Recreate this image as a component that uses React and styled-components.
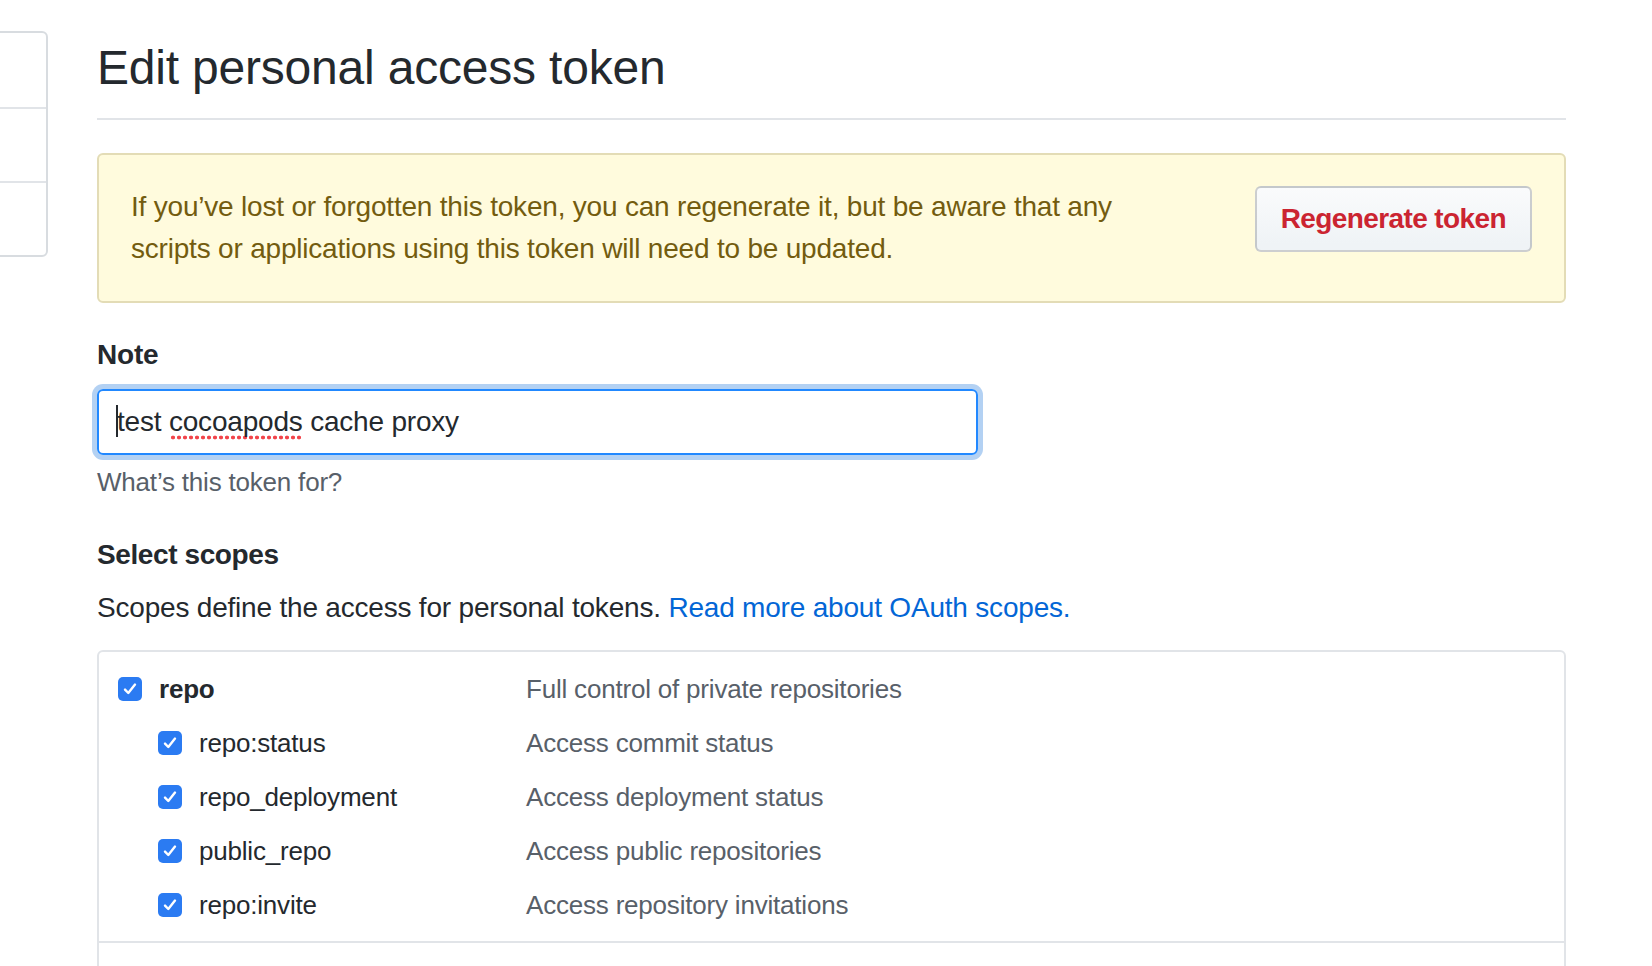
import React from 'react';
import styled, { createGlobalStyle } from 'styled-components';

const GlobalStyle = createGlobalStyle`
  html, body {
    margin: 0;
    padding: 0;
    background: #fff;
  }
  body {
    font-family: "Liberation Sans", Arial, sans-serif;
    color: #24292e;
    letter-spacing: -0.2px;
    overflow-x: hidden;
  }
  * {
    box-sizing: border-box;
  }
`;

// only the right edge of the developer settings menu is in view
const menuItems = [
  { id: 'apps', label: 'GitHub Apps' },
  { id: 'oauth', label: 'OAuth Apps' },
  { id: 'tokens', label: 'Personal access tokens', active: true }
];

const repoScopes = [
  { name: 'repo:status', description: 'Access commit status' },
  { name: 'repo_deployment', description: 'Access deployment status' },
  { name: 'public_repo', description: 'Access public repositories' },
  { name: 'repo:invite', description: 'Access repository invitations' }
];

const Layout = styled.div`
  display: flex;
  align-items: flex-start;
  gap: 49px;
  padding: 31px 86px 0 0;
`;

const Sidebar = styled.nav`
  flex: 0 0 420px;
  margin-left: -372px;
`;

const Menu = styled.div`
  border: 2px solid #d8dce0;
  border-radius: 6px;
  overflow: hidden;
`;

const MenuItem = styled.a`
  display: block;
  height: 74px;
  border-left: 4px solid ${(p) => (p.$active ? '#f9826c' : 'transparent')};

  & + & {
    border-top: 2px solid #e1e4e8;
  }
`;

const Main = styled.main`
  flex: 1;
  min-width: 0;
`;

const Subhead = styled.div`
  padding: 7px 0 20px;
  border-bottom: 2px solid #e1e4e8;
  margin-bottom: 33px;
`;

const Title = styled.h2`
  margin: 0;
  font-size: 48px;
  line-height: 60px;
  font-weight: 400;
  color: #24292e;
`;

const Flash = styled.div`
  display: flex;
  justify-content: space-between;
  align-items: flex-start;
  padding: 31px 32px;
  background: #fffbdd;
  border: 2px solid #e3dcb6;
  border-radius: 6px;
  color: #735c0f;
  font-size: 28px;
  line-height: 42px;
`;

const FlashText = styled.p`
  margin: 0;
  max-width: 1040px;
`;

const Button = styled.button`
  flex-shrink: 0;
  height: 66px;
  padding: 0 24px;
  border: 2px solid rgba(27, 31, 35, 0.2);
  border-radius: 6px;
  background: linear-gradient(180deg, #fafbfc, #eff3f6 90%);
  color: #cb2431;
  font-family: inherit;
  font-size: 28px;
  font-weight: 700;
  letter-spacing: -0.6px;
  cursor: pointer;
`;

const FormGroup = styled.div`
  margin-top: 31px;
`;

const Label = styled.label`
  display: block;
  margin-bottom: 13px;
  font-size: 28px;
  line-height: 42px;
  font-weight: 700;
`;

const Field = styled.div`
  width: 881px;
  height: 66px;
  padding: 0 16px 0 17px;
  border: 2px solid #2188ff;
  border-radius: 6px;
  box-shadow: 0 0 0 5px rgba(3, 102, 214, 0.3);
  font-size: 28px;
  line-height: 62px;
  color: #24292e;
  white-space: nowrap;
`;

const Caret = styled.span`
  display: inline-block;
  width: 2px;
  height: 32px;
  margin-right: -1px;
  background: #24292e;
  vertical-align: -6px;
`;

const Misspelled = styled.span`
  padding-bottom: 3px;
  background-image: radial-gradient(circle, #f2454b 1.7px, transparent 2.2px);
  background-size: 6px 5px;
  background-repeat: repeat-x;
  background-position: 1px 100%;
`;

const Note = styled.p`
  margin: 8px 0 0;
  font-size: 26px;
  line-height: 39px;
  color: #586069;
`;

const SectionTitle = styled.h3`
  margin: 32px 0 0;
  font-size: 28px;
  line-height: 42px;
  font-weight: 700;
  letter-spacing: -0.4px;
`;

const Lead = styled.p`
  margin: 11px 0 0;
  font-size: 28px;
  line-height: 42px;
`;

const Link = styled.a`
  color: #0366d6;
  text-decoration: none;
`;

const ScopeList = styled.div`
  margin-top: 21px;
  border: 2px solid #e1e4e8;
  border-radius: 6px;
`;

const ScopeGroup = styled.div`
  padding: 10px 0 9px 19px;
  min-height: ${(p) => (p.$empty ? '60px' : 'auto')};

  & + & {
    border-top: 2px solid #e1e4e8;
  }
`;

const ScopeRow = styled.div`
  display: flex;
  align-items: center;
  height: 54px;
  font-size: 26px;
  line-height: 40px;
`;

const ScopeName = styled.label`
  display: flex;
  align-items: center;
  gap: 17px;
  flex: 0 0 408px;
  padding-left: ${(p) => (p.$nested ? '40px' : '0')};
  font-weight: ${(p) => (p.$nested ? 400 : 700)};
  color: #24292e;
`;

const Box = styled.span`
  display: inline-flex;
  align-items: center;
  justify-content: center;
  width: 24px;
  height: 24px;
  border-radius: 5px;
  background: #2b7bf2;
  flex-shrink: 0;
`;

const ScopeDesc = styled.span`
  color: #586069;
`;

function Checkbox() {
  return (
    <Box role="checkbox" aria-checked="true">
      <svg width="16" height="16" viewBox="0 0 16 16" fill="none">
        <path
          d="M3 8.6 L6.3 12 L13 3.6"
          stroke="#fff"
          strokeWidth="2.4"
          strokeLinecap="round"
          strokeLinejoin="round"
        />
      </svg>
    </Box>
  );
}

function Scope({ name, description, nested }) {
  return (
    <ScopeRow>
      <ScopeName $nested={nested}>
        <Checkbox />
        {name}
      </ScopeName>
      <ScopeDesc>{description}</ScopeDesc>
    </ScopeRow>
  );
}

export default function App() {
  return (
    <>
      <GlobalStyle />
      <Layout>
        <Sidebar>
          <Menu>
            {menuItems.map((item) => (
              <MenuItem
                key={item.id}
                href="#"
                aria-label={item.label}
                $active={item.active}
              />
            ))}
          </Menu>
        </Sidebar>

        <Main>
          <Subhead>
            <Title>Edit personal access token</Title>
          </Subhead>

          <Flash>
            <FlashText>
              If you’ve lost or forgotten this token, you can regenerate it, but be aware that any
              scripts or applications using this token will need to be updated.
            </FlashText>
            <Button type="button">Regenerate token</Button>
          </Flash>

          <FormGroup>
            <Label>Note</Label>
            <Field role="textbox" aria-label="Note">
              <Caret />
              test <Misspelled>cocoapods</Misspelled> cache proxy
            </Field>
            <Note>What’s this token for?</Note>
          </FormGroup>

          <SectionTitle>Select scopes</SectionTitle>
          <Lead>
            Scopes define the access for personal tokens.{' '}
            <Link href="#">Read more about OAuth scopes.</Link>
          </Lead>

          <ScopeList>
            <ScopeGroup>
              <Scope name="repo" description="Full control of private repositories" />
              {repoScopes.map((scope) => (
                <Scope key={scope.name} nested {...scope} />
              ))}
            </ScopeGroup>
            {/* next scope group starts just below the fold */}
            <ScopeGroup $empty />
          </ScopeList>
        </Main>
      </Layout>
    </>
  );
}
